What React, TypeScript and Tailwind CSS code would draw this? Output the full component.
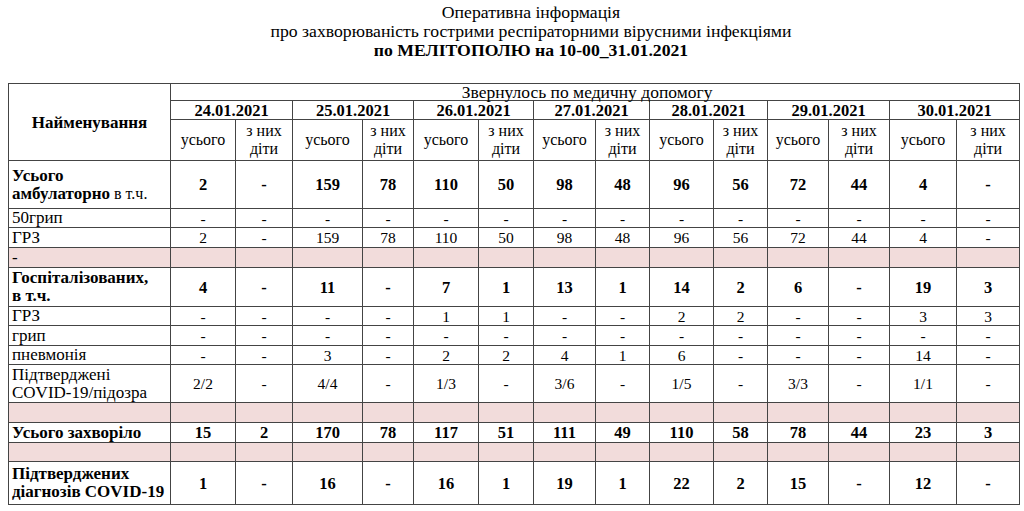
import React from 'react';

const dates = ["24.01.2021", "25.01.2021", "26.01.2021", "27.01.2021", "28.01.2021", "29.01.2021", "30.01.2021"];
const widths = [162, 65, 57, 70, 51, 65, 55, 62, 54, 64, 54, 61, 61, 67, 63];

type Row = {
  name: React.ReactNode;
  values: string[];
  h: number;
  bold?: boolean;
  pink?: boolean;
};

const rows: Row[] = [
  {
    name: (<><b>Усього<br />амбулаторно</b><span className="text-[16px]"> в т.ч.</span></>),
    values: ["2", "-", "159", "78", "110", "50", "98", "48", "96", "56", "72", "44", "4", "-"],
    h: 48, bold: true,
  },
  { name: "50грип", values: ["-", "-", "-", "-", "-", "-", "-", "-", "-", "-", "-", "-", "-", "-"], h: 19 },
  { name: "ГРЗ", values: ["2", "-", "159", "78", "110", "50", "98", "48", "96", "56", "72", "44", "4", "-"], h: 20 },
  { name: "-", values: Array(14).fill(""), h: 20, pink: true },
  {
    name: (<b>Госпіталізованих,<br />в т.ч.</b>),
    values: ["4", "-", "11", "-", "7", "1", "13", "1", "14", "2", "6", "-", "19", "3"],
    h: 39, bold: true,
  },
  { name: "ГРЗ", values: ["-", "-", "-", "-", "1", "1", "-", "-", "2", "2", "-", "-", "3", "3"], h: 19 },
  { name: "грип", values: ["-", "-", "-", "-", "-", "-", "-", "-", "-", "-", "-", "-", "-", "-"], h: 20 },
  { name: "пневмонія", values: ["-", "-", "3", "-", "2", "2", "4", "1", "6", "-", "-", "-", "14", "-"], h: 19 },
  {
    name: (<>Підтверджені<br />COVID-19/підозра</>),
    values: ["2/2", "-", "4/4", "-", "1/3", "-", "3/6", "-", "1/5", "-", "3/3", "-", "1/1", "-"],
    h: 38,
  },
  { name: "", values: Array(14).fill(""), h: 20, pink: true },
  {
    name: (<b>Усього захворіло</b>),
    values: ["15", "2", "170", "78", "117", "51", "111", "49", "110", "58", "78", "44", "23", "3"],
    h: 20, bold: true,
  },
  { name: "", values: Array(14).fill(""), h: 19, pink: true },
  {
    name: (<b>Підтверджених<br />діагнозів COVID-19</b>),
    values: ["1", "-", "16", "-", "16", "1", "19", "1", "22", "2", "15", "-", "12", "-"],
    h: 43, bold: true,
  },
];

export default function App() {
  return (
    <div className="w-[1024px] h-[511px] bg-white text-black overflow-hidden" style={{ fontFamily: '"Liberation Serif", "Times New Roman", serif' }}>
      <div className="pt-[3px] pl-[38px] text-center text-[17.7px] leading-[19px]">
        <div>Оперативна інформація</div>
        <div>про захворюваність гострими респіраторними вірусними інфекціями</div>
        <div className="font-bold">по МЕЛІТОПОЛЮ на 10-00_31.01.2021</div>
      </div>
      <table className="ml-[8px] mt-[23px] w-[1011px] table-fixed border-collapse border border-[#555] text-[15px] leading-[17px]">
        <colgroup>
          {widths.map((w, i) => (
            <col key={i} style={{ width: w }} />
          ))}
        </colgroup>
        <thead>
          <tr className="h-[17px]">
            <th rowSpan={3} className="border border-[#444] font-bold text-[17px] align-middle">
              Найменування
            </th>
            <th colSpan={14} className="border border-[#444] p-0 pr-[16px] font-normal text-[17.5px] leading-[15px]">
              Звернулось по медичну допомогу
            </th>
          </tr>
          <tr className="h-[19px]">
            {dates.map(d => (
              <th key={d} colSpan={2} className="border border-[#444] p-0 font-bold text-[16.5px] leading-[17px]">
                {d}
              </th>
            ))}
          </tr>
          <tr className="h-[41px]">
            {dates.map(d => (
              <React.Fragment key={d}>
                <th className="border border-[#444] p-0 font-normal text-[16px] leading-[18px]">усього</th>
                <th className="border border-[#444] p-0 font-normal text-[16px] leading-[18px]">з них<br />діти</th>
              </React.Fragment>
            ))}
          </tr>
        </thead>
        <tbody>
          {rows.map((row, i) => (
            <tr key={i} style={{ height: row.h }} className={row.pink ? "bg-[#f2dcdb]" : ""}>
              <td className="border border-[#444] pl-[3px] pr-0 py-0 text-left align-middle text-[17px] leading-[18px] whitespace-nowrap overflow-hidden">
                {row.name}
              </td>
              {row.values.map((v, j) => (
                <td key={j} className={"border border-[#444] p-0 text-center align-middle " + (row.bold ? "font-bold text-[16.5px]" : "text-[15.5px]")}>
                  {v}
                </td>
              ))}
            </tr>
          ))}
        </tbody>
      </table>
    </div>
  );
}
